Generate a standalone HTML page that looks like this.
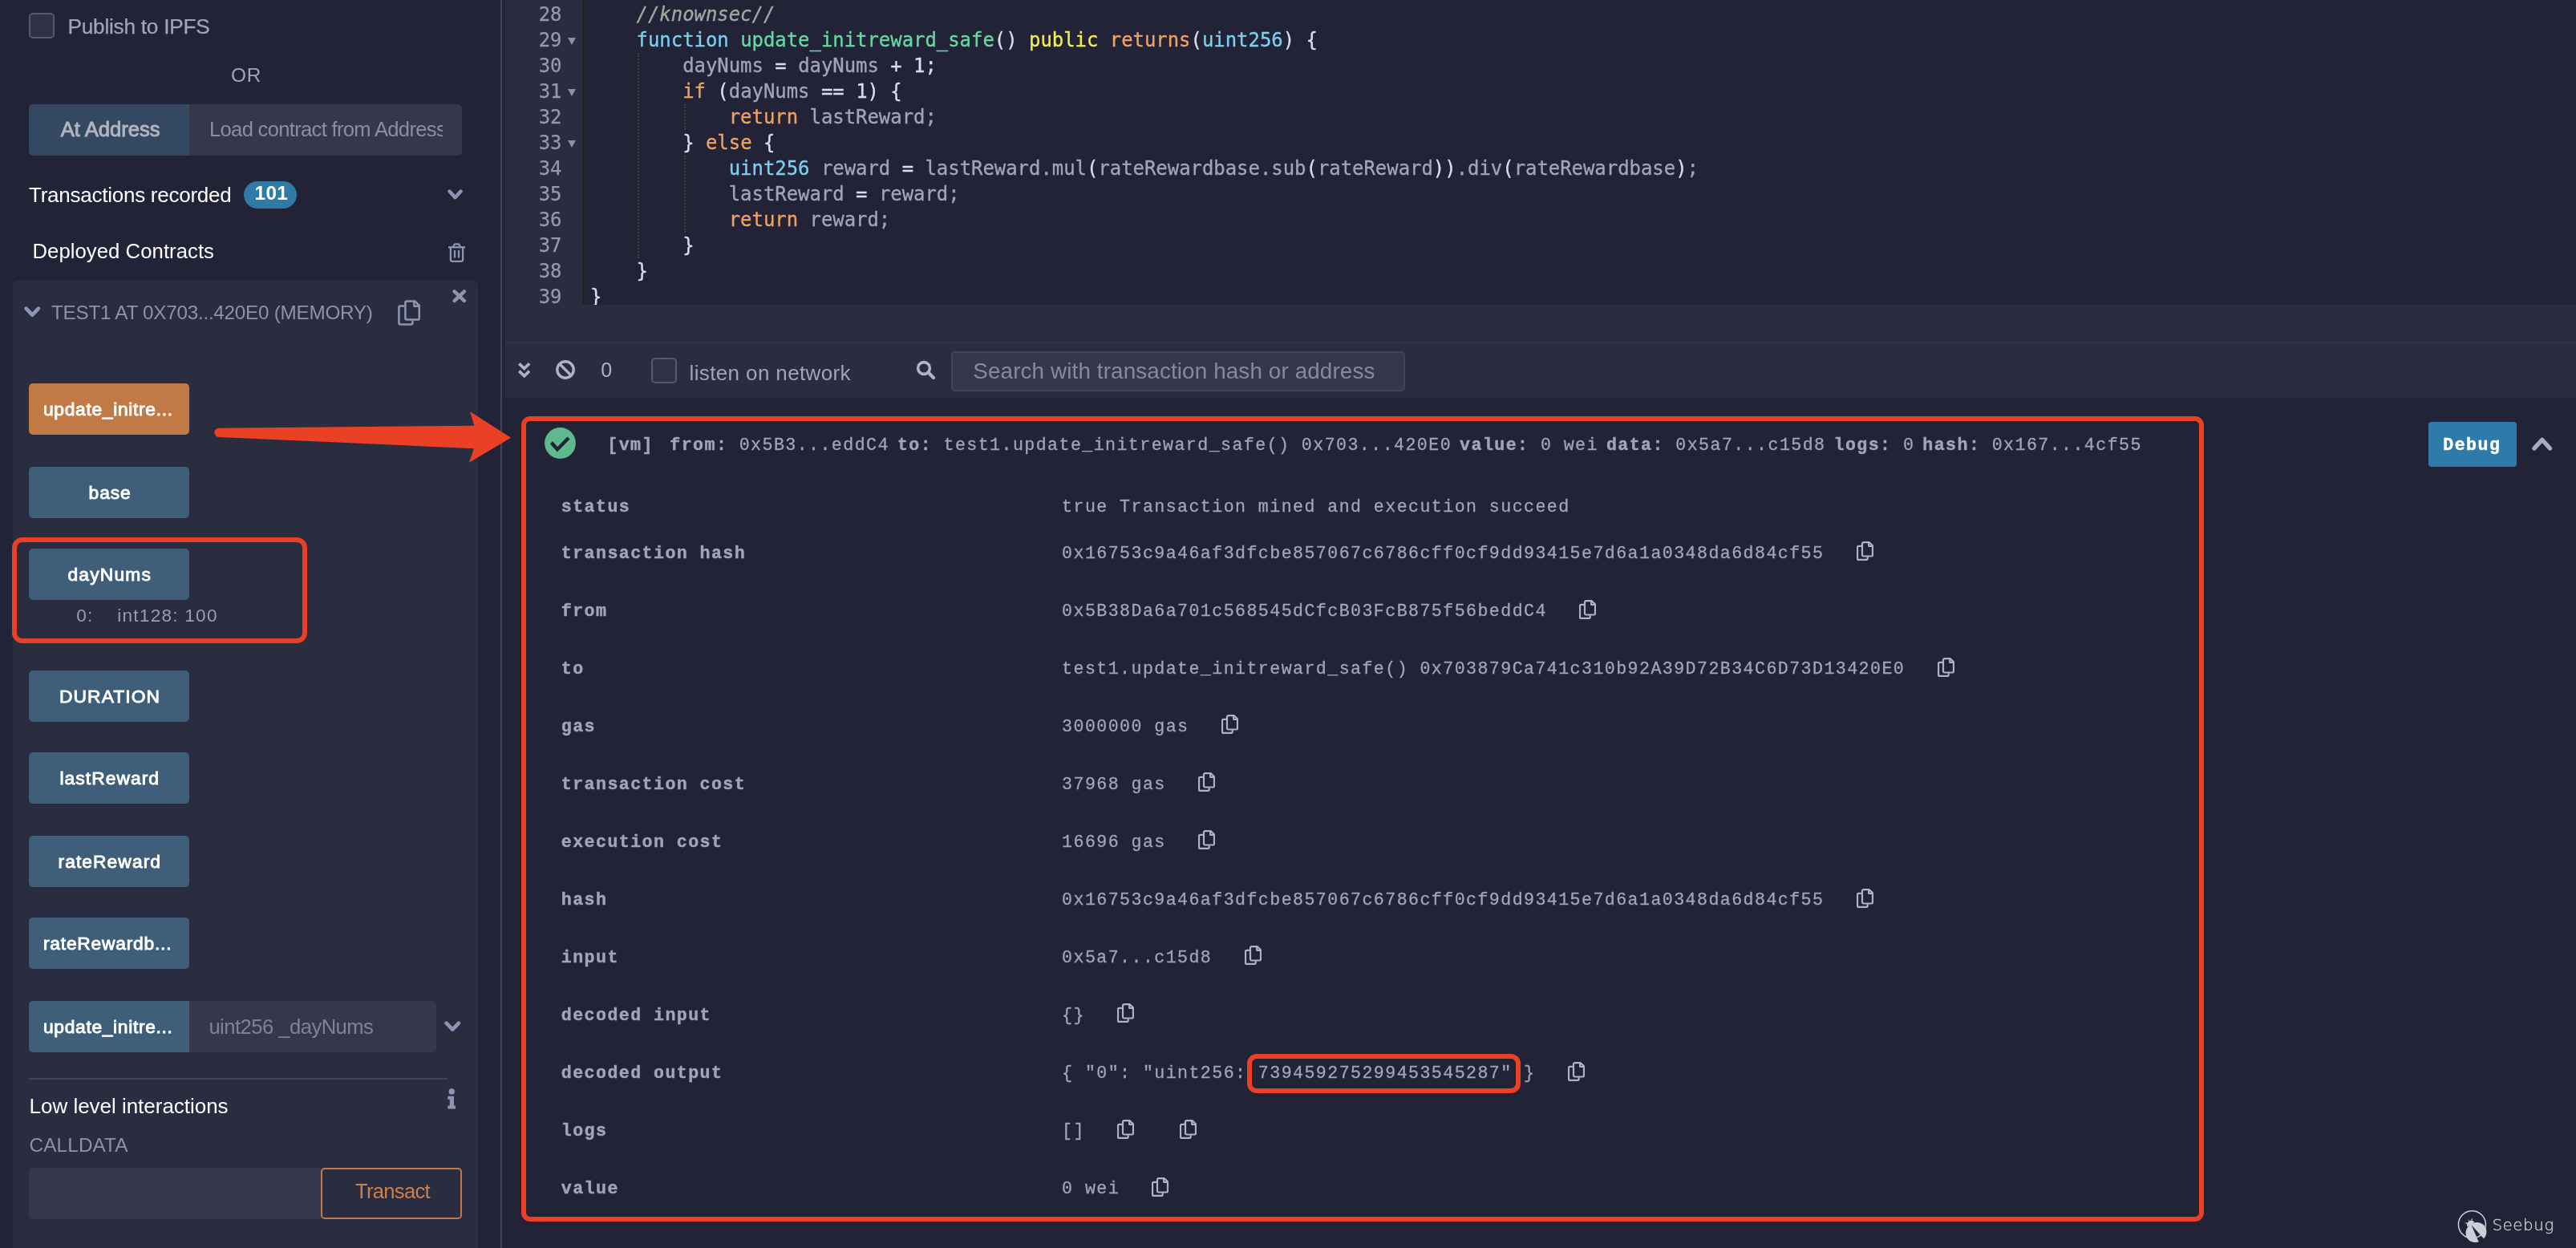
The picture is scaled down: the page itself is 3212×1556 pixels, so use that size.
<!DOCTYPE html>
<html lang="en"><head><meta charset="utf-8"><title>Remix - Ethereum IDE</title><style>
html,body{margin:0;padding:0;background:#222336;}
body{width:3212px;height:1556px;position:relative;overflow:hidden;}
#app{position:absolute;left:0;top:0;width:3212px;height:1556px;will-change:transform;}
.a{position:absolute;}
.t{white-space:pre;}
.ln{font:23.92px/32px 'DejaVu Sans Mono', 'Liberation Mono', monospace;color:#9697b1;text-align:right;height:32px;-webkit-text-stroke:0.25px;}
.cl{font:23.92px/32px 'DejaVu Sans Mono', 'Liberation Mono', monospace;color:#a2a3bd;white-space:pre;height:32px;-webkit-text-stroke:0.3px;}
.cm{color:#a6a6a4;font-style:italic;}
.kw,.ty{color:#7dcff0;}
.fn{color:#66d9a0;}
.pub{color:#f3ee4a;}
.ret{color:#f0a262;}
.pn,.op,.num{color:#dcdcec;}
.id{color:#a2a3bd;}
</style></head>
<body>
<div id="app">
<div class="a" style="left:0;top:0;width:3212px;height:1556px;background:#222336"></div>
<div class="a " style="left:16px;top:350px;width:580px;height:1226px;background:#2a2c3f;border-radius:5px;"></div>
<div class="a " style="left:624px;top:0px;width:2px;height:1556px;background:#424559;"></div>
<div class="a " style="left:630px;top:0px;width:96px;height:380px;background:#2a2c3f;"></div>
<div class="a " style="left:726px;top:0px;width:1.6px;height:380px;background:#24241f;"></div>
<div class="a " style="left:630px;top:380px;width:2582px;height:116px;background:#2a2c3f;"></div>
<div class="a " style="left:630px;top:426px;width:2582px;height:2px;background:#2e3245;"></div>
<div class="a " style="left:36px;top:16px;width:32px;height:32px;background:#2f3147;border:2px solid #555872;border-radius:5px;box-sizing:border-box;"></div>
<span id="t1" class="a t" style="left:84.50px;top:20.32px;font:normal 26.2px/1 'Liberation Sans', sans-serif;color:#a2a3bd;letter-spacing:-0.233px;-webkit-text-stroke:0.25px #a2a3bd;">Publish to IPFS</span>
<span id="t2" class="a t" style="left:288.00px;top:81.55px;font:normal 24.4px/1 'Liberation Sans', sans-serif;color:#a2a3bd;letter-spacing:0.703px;">OR</span>
<div class="a " style="left:36px;top:130px;width:200px;height:64px;background:#344961;border-radius:5px 0 0 5px;"></div>
<div class="a " style="left:236px;top:130px;width:340px;height:64px;background:#35384c;border-radius:0 5px 5px 0;"></div>
<span id="t3" class="a t" style="left:75.80px;top:148.73px;font:normal 25.6px/1 'Liberation Sans', sans-serif;color:#b1b5c2;letter-spacing:-0.008px;-webkit-text-stroke:0.9px #b1b5c2;">At Address</span>
<div class="a" style="left:255px;top:140px;width:296.5px;height:44px;overflow:hidden">
<span id="t4" class="a t" style="left:6.00px;top:8.73px;font:normal 25.6px/1 'Liberation Sans', sans-serif;color:#8b8e9b;letter-spacing:-0.692px;">Load contract from Address</span>
</div>
<span id="t5" class="a t" style="left:36.00px;top:230.19px;font:normal 26px/1 'Liberation Sans', sans-serif;color:#fdfdff;letter-spacing:-0.249px;">Transactions recorded</span>
<div class="a " style="left:303.6px;top:226px;width:66.4px;height:34px;background:#2f7ba6;border-radius:17px;"></div>
<span id="t6" class="a t" style="left:317.50px;top:229.13px;font:bold 24.3px/1 'Liberation Sans', sans-serif;color:#fff;letter-spacing:0.419px;">101</span>
<svg class="a" style="left:558px;top:235.5px;" width="19" height="13" viewBox="0 0 19 13"><path d="M2.5 2.5L9.5 10.200000000000001L16.5 2.5" fill="none" stroke="#8e95b3" stroke-width="4.4" stroke-linecap="round" stroke-linejoin="round"/></svg>
<span id="t7" class="a t" style="left:40.50px;top:300.94px;font:normal 25.7px/1 'Liberation Sans', sans-serif;color:#fdfdff;letter-spacing:0.050px;">Deployed Contracts</span>
<svg class="a" style="left:559px;top:303px;" width="21" height="24" viewBox="0 0 21 24"><g fill="none" stroke="#8e95b3" stroke-width="2.3" stroke-linecap="butt" stroke-linejoin="round"><path d="M0 5.3h21"/><path d="M5.8 5l1.7-3a1.2 1.2 0 0 1 1-.6h4a1.2 1.2 0 0 1 1 .6l1.7 3"/><path d="M2.9 5.6v15.2a2 2 0 0 0 2 2h11.2a2 2 0 0 0 2-2V5.6"/><path d="M8 9v9.6M13 9v9.6"/></g></svg>
<svg class="a" style="left:30px;top:381.5px;" width="20.5" height="13.5" viewBox="0 0 20.5 13.5"><path d="M2.5999999999999996 2.5999999999999996L10.25 10.6L17.9 2.5999999999999996" fill="none" stroke="#8e95b3" stroke-width="4.6" stroke-linecap="round" stroke-linejoin="round"/></svg>
<span id="t8" class="a t" style="left:64.00px;top:377.83px;font:normal 24.3px/1 'Liberation Sans', sans-serif;color:#8e91ab;letter-spacing:-0.277px;">TEST1 AT 0X703...420E0 (MEMORY)</span>
<svg class="a" style="left:496.1px;top:373.9px;" width="28.2" height="32" viewBox="0 0 28.2 32"><g fill="none" stroke="#8e95b3" stroke-width="2.50" stroke-linejoin="round" stroke-linecap="butt"><path d="M8.4 7.6H3.4a2 2 0 0 0-2 2v19a2 2 0 0 0 2 2h13a2 2 0 0 0 2-2v-3"/><path d="M11.4 1.4h9.8l5.6 5.6v15.6a2 2 0 0 1-2 2H11.4a2 2 0 0 1-2-2V3.4a2 2 0 0 1 2-2z"/><path d="M20.4 1.6v6.2h6.2"/></g></svg>
<svg class="a" style="left:564px;top:361px;" width="17.5" height="16.5" viewBox="0 0 17.5 16.5"><path d="M2.6 2.4L14.9 14.1M14.9 2.4L2.6 14.1" stroke="#8e95b3" stroke-width="4.4" stroke-linecap="round" fill="none"/></svg>
<div class="a " style="left:36px;top:478px;width:200px;height:64px;background:#c17a45;border-radius:5px;"></div>
<span id="t9" class="a t" style="left:54.00px;top:498.70px;font:normal 22.8px/1 'Liberation Sans', sans-serif;color:#fff;letter-spacing:0.680px;-webkit-text-stroke:0.9px #fff;">update_initre...</span>
<div class="a " style="left:36px;top:582px;width:200px;height:64px;background:#3e5e7a;border-radius:5px;"></div>
<span id="t10" class="a t" style="left:110.60px;top:602.70px;font:normal 22.8px/1 'Liberation Sans', sans-serif;color:#fff;letter-spacing:0.890px;-webkit-text-stroke:0.9px #fff;">base</span>
<div class="a " style="left:36px;top:684px;width:200px;height:64px;background:#3e5e7a;border-radius:5px;"></div>
<span id="t11" class="a t" style="left:84.50px;top:704.70px;font:normal 22.8px/1 'Liberation Sans', sans-serif;color:#fff;letter-spacing:1.172px;-webkit-text-stroke:0.9px #fff;">dayNums</span>
<span id="t12" class="a t" style="left:95.20px;top:756.67px;font:normal 22.6px/1 'Liberation Sans', sans-serif;color:#9a9cb5;letter-spacing:1.275px;">0:</span>
<span id="t13" class="a t" style="left:146.30px;top:756.67px;font:normal 22.6px/1 'Liberation Sans', sans-serif;color:#9a9cb5;letter-spacing:1.234px;">int128: 100</span>
<div class="a " style="left:36px;top:836px;width:200px;height:64px;background:#3e5e7a;border-radius:5px;"></div>
<span id="t14" class="a t" style="left:74.00px;top:856.70px;font:normal 22.8px/1 'Liberation Sans', sans-serif;color:#fff;letter-spacing:1.080px;-webkit-text-stroke:0.9px #fff;">DURATION</span>
<div class="a " style="left:36px;top:938px;width:200px;height:64px;background:#3e5e7a;border-radius:5px;"></div>
<span id="t15" class="a t" style="left:74.50px;top:958.70px;font:normal 22.8px/1 'Liberation Sans', sans-serif;color:#fff;letter-spacing:1.057px;-webkit-text-stroke:0.9px #fff;">lastReward</span>
<div class="a " style="left:36px;top:1042px;width:200px;height:64px;background:#3e5e7a;border-radius:5px;"></div>
<span id="t16" class="a t" style="left:72.50px;top:1062.70px;font:normal 22.8px/1 'Liberation Sans', sans-serif;color:#fff;letter-spacing:1.075px;-webkit-text-stroke:0.9px #fff;">rateReward</span>
<div class="a " style="left:36px;top:1144px;width:200px;height:64px;background:#3e5e7a;border-radius:5px;"></div>
<span id="t17" class="a t" style="left:54.00px;top:1164.70px;font:normal 22.8px/1 'Liberation Sans', sans-serif;color:#fff;letter-spacing:0.769px;-webkit-text-stroke:0.9px #fff;">rateRewardb...</span>
<div class="a " style="left:36px;top:1248px;width:200px;height:64px;background:#3e5e7a;border-radius:5px 0 0 5px;"></div>
<span id="t18" class="a t" style="left:54.00px;top:1268.70px;font:normal 22.8px/1 'Liberation Sans', sans-serif;color:#fff;letter-spacing:0.667px;-webkit-text-stroke:0.9px #fff;">update_initre...</span>
<div class="a " style="left:236px;top:1248px;width:308px;height:64px;background:#35384c;border-radius:0 5px 5px 0;"></div>
<span id="t19" class="a t" style="left:260.40px;top:1268.33px;font:normal 25.6px/1 'Liberation Sans', sans-serif;color:#7f8292;letter-spacing:-0.526px;">uint256 _dayNums</span>
<svg class="a" style="left:554px;top:1273px;" width="20.5" height="13.5" viewBox="0 0 20.5 13.5"><path d="M2.5999999999999996 2.5999999999999996L10.25 10.6L17.9 2.5999999999999996" fill="none" stroke="#8e95b3" stroke-width="4.6" stroke-linecap="round" stroke-linejoin="round"/></svg>
<div class="a " style="left:15px;top:670.4px;width:367.5px;height:131.4px;border:6px solid #ea4025;border-radius:13px;box-sizing:border-box;"></div>
<div class="a " style="left:36px;top:1344px;width:522px;height:2px;background:#42455a;"></div>
<span id="t20" class="a t" style="left:36.60px;top:1366.39px;font:normal 26px/1 'Liberation Sans', sans-serif;color:#fdfdff;letter-spacing:-0.027px;">Low level interactions</span>
<svg class="a" style="left:557.2px;top:1357.4px;" width="12" height="27" viewBox="0 0 12 27"><circle cx="6.2" cy="3.9" r="3.7" fill="#8e95b3"/><path d="M1.3 9.8h7.7v11.8h1.9v4H1.3v-4h2.5v-7.8H1.3z" fill="#8e95b3"/></svg>
<span id="t21" class="a t" style="left:36.60px;top:1416.03px;font:normal 24.3px/1 'Liberation Sans', sans-serif;color:#8e91ab;letter-spacing:0.127px;">CALLDATA</span>
<div class="a " style="left:36px;top:1456px;width:364px;height:64px;background:#35384c;border-radius:5px 0 0 5px;"></div>
<div class="a " style="left:400px;top:1456px;width:176px;height:64px;border:2px solid #c17a45;border-radius:5px;box-sizing:border-box;"></div>
<span id="t22" class="a t" style="left:443.00px;top:1473.03px;font:normal 25.6px/1 'Liberation Sans', sans-serif;color:#c9824e;letter-spacing:-0.703px;">Transact</span>
<svg class="a" style="left:0;top:0" width="3212" height="1556" viewBox="0 0 3212 1556"><path d="M273 533.7 L591.4 530.7 L585.8 513.1 L637.1 545.7 L585 576.7 L590.9 559.2 L273 544.9 A5.6 5.6 0 0 1 273 533.7Z" fill="#ea4025"/></svg>
<div class="a" style="left:630px;top:0;width:2582px;height:380px;overflow:hidden">
<div class="a ln" style="left:0;top:1.8px;width:70.5px;">28</div>
<div class="a cl" style="left:106px;top:1.8px;">    <span class="cm">//knownsec//</span></div>
<div class="a ln" style="left:0;top:33.8px;width:70.5px;">29</div>
<div class="a" style="left:78px;top:46.8px;width:0;height:0;border-left:5px solid transparent;border-right:5px solid transparent;border-top:9.4px solid #8e8fa8;"></div>
<div class="a cl" style="left:106px;top:33.8px;">    <span class="kw">function</span> <span class="fn">update_initreward_safe</span><span class="pn">()</span> <span class="pub">public</span> <span class="ret">returns</span><span class="pn">(</span><span class="ty">uint256</span><span class="pn">)</span> <span class="pn">{</span></div>
<div class="a ln" style="left:0;top:65.8px;width:70.5px;">30</div>
<div class="a cl" style="left:106px;top:65.8px;">        <span class="id">dayNums</span> <span class="op">=</span> <span class="id">dayNums</span> <span class="op">+</span> <span class="num">1</span><span class="pn">;</span></div>
<div class="a ln" style="left:0;top:97.8px;width:70.5px;">31</div>
<div class="a" style="left:78px;top:110.8px;width:0;height:0;border-left:5px solid transparent;border-right:5px solid transparent;border-top:9.4px solid #8e8fa8;"></div>
<div class="a cl" style="left:106px;top:97.8px;">        <span class="ret">if</span> <span class="pn">(</span><span class="id">dayNums</span> <span class="op">==</span> <span class="num">1</span><span class="pn">)</span> <span class="pn">{</span></div>
<div class="a ln" style="left:0;top:129.8px;width:70.5px;">32</div>
<div class="a cl" style="left:106px;top:129.8px;">            <span class="ret">return</span> <span class="id">lastReward</span><span class="id">;</span></div>
<div class="a ln" style="left:0;top:161.8px;width:70.5px;">33</div>
<div class="a" style="left:78px;top:174.8px;width:0;height:0;border-left:5px solid transparent;border-right:5px solid transparent;border-top:9.4px solid #8e8fa8;"></div>
<div class="a cl" style="left:106px;top:161.8px;">        <span class="pn">}</span> <span class="ret">else</span> <span class="pn">{</span></div>
<div class="a ln" style="left:0;top:193.8px;width:70.5px;">34</div>
<div class="a cl" style="left:106px;top:193.8px;">            <span class="ty">uint256</span> <span class="id">reward</span> <span class="op">=</span> <span class="id">lastReward</span><span class="id">.</span><span class="id">mul</span><span class="pn">(</span><span class="id">rateRewardbase</span><span class="id">.</span><span class="id">sub</span><span class="pn">(</span><span class="id">rateReward</span><span class="pn">))</span><span class="id">.</span><span class="id">div</span><span class="pn">(</span><span class="id">rateRewardbase</span><span class="pn">)</span><span class="id">;</span></div>
<div class="a ln" style="left:0;top:225.8px;width:70.5px;">35</div>
<div class="a cl" style="left:106px;top:225.8px;">            <span class="id">lastReward</span> <span class="op">=</span> <span class="id">reward</span><span class="id">;</span></div>
<div class="a ln" style="left:0;top:257.8px;width:70.5px;">36</div>
<div class="a cl" style="left:106px;top:257.8px;">            <span class="ret">return</span> <span class="id">reward</span><span class="id">;</span></div>
<div class="a ln" style="left:0;top:289.8px;width:70.5px;">37</div>
<div class="a cl" style="left:106px;top:289.8px;">        <span class="pn">}</span></div>
<div class="a ln" style="left:0;top:321.8px;width:70.5px;">38</div>
<div class="a cl" style="left:106px;top:321.8px;">    <span class="pn">}</span></div>
<div class="a ln" style="left:0;top:353.8px;width:70.5px;">39</div>
<div class="a cl" style="left:106px;top:353.8px;"><span class="pn">}</span></div>
<div class="a" style="left:165px;top:65.8px;height:256px;border-left:2px dotted #434338;"></div>
<div class="a" style="left:222.60000000000002px;top:129.8px;height:32px;border-left:2px dotted #434338;"></div>
<div class="a" style="left:222.60000000000002px;top:193.8px;height:96px;border-left:2px dotted #434338;"></div>
</div>
<svg class="a" style="left:645.8px;top:451.6px;" width="15.4" height="19" viewBox="0 0 15.4 19"><path d="M1.3 1.4L7.7 7.6L14.1 1.4M1.3 10.6L7.7 16.8L14.1 10.6" fill="none" stroke="#b0b1ce" stroke-width="3.6" stroke-linecap="butt" stroke-linejoin="miter"/></svg>
<svg class="a" style="left:693.2px;top:449px;" width="24" height="24" viewBox="0 0 24 24"><circle cx="12" cy="12" r="10.2" fill="none" stroke="#b0b1ce" stroke-width="3.4"/><path d="M5 5L19 19" stroke="#b0b1ce" stroke-width="3.2"/></svg>
<span id="t23" class="a t" style="left:749.20px;top:449.04px;font:normal 25px/1 'Liberation Sans', sans-serif;color:#b0b1ce;">0</span>
<div class="a " style="left:812px;top:446px;width:31.6px;height:32px;background:#2f3147;border:2px solid #555872;border-radius:5px;box-sizing:border-box;"></div>
<span id="t24" class="a t" style="left:859.50px;top:451.79px;font:normal 26px/1 'Liberation Sans', sans-serif;color:#a2a3bd;letter-spacing:0.376px;">listen on network</span>
<svg class="a" style="left:1141.5px;top:448.6px;" width="24.5" height="24.5" viewBox="0 0 24.5 24.5"><circle cx="10" cy="10" r="7.4" fill="none" stroke="#b0b1ce" stroke-width="3.6"/><path d="M15.6 15.6L22 22" stroke="#b0b1ce" stroke-width="4.2" stroke-linecap="round"/></svg>
<div class="a " style="left:1186px;top:438px;width:566px;height:49.5px;background:#35384c;border:2px solid #41445a;border-radius:5px;box-sizing:border-box;"></div>
<span id="t25" class="a t" style="left:1213.30px;top:448.77px;font:normal 27.8px/1 'Liberation Sans', sans-serif;color:#868c96;letter-spacing:0.134px;">Search with transaction hash or address</span>
<div class="a " style="left:650px;top:519px;width:2098px;height:1004px;border:6.5px solid #ea4025;border-radius:11px;box-sizing:border-box;"></div>
<svg class="a" style="left:678.7px;top:533.4px;" width="39" height="39" viewBox="0 0 39 39"><circle cx="19.5" cy="19.5" r="19.4" fill="#60b88f"/><path d="M8.5 18.8L15.9 27.2L30 13" fill="none" stroke="#222336" stroke-width="4.4" stroke-linecap="butt" stroke-linejoin="miter"/></svg>
<span id="t26" class="a t" style="left:757.30px;top:545.44px;font:bold 21.6px/1 'Liberation Mono', monospace;color:#a2a3bd;letter-spacing:1.44px;-webkit-text-stroke:0.4px #a2a3bd;">[vm]</span>
<span id="t27" class="a t" style="left:835.30px;top:545.44px;font:bold 21.6px/1 'Liberation Mono', monospace;color:#a2a3bd;letter-spacing:1.44px;-webkit-text-stroke:0.4px #a2a3bd;">from:</span>
<span id="t28" class="a t" style="left:921.70px;top:545.44px;font:normal 21.6px/1 'Liberation Mono', monospace;color:#a2a3bd;letter-spacing:1.44px;-webkit-text-stroke:0.3px #a2a3bd;">0x5B3...eddC4</span>
<span id="t29" class="a t" style="left:1118.90px;top:545.44px;font:bold 21.6px/1 'Liberation Mono', monospace;color:#a2a3bd;letter-spacing:1.44px;-webkit-text-stroke:0.4px #a2a3bd;">to:</span>
<span id="t30" class="a t" style="left:1176.50px;top:545.44px;font:normal 21.6px/1 'Liberation Mono', monospace;color:#a2a3bd;letter-spacing:1.44px;-webkit-text-stroke:0.3px #a2a3bd;">test1.update_initreward_safe() 0x703...420E0</span>
<span id="t31" class="a t" style="left:1820.10px;top:545.44px;font:bold 21.6px/1 'Liberation Mono', monospace;color:#a2a3bd;letter-spacing:1.44px;-webkit-text-stroke:0.4px #a2a3bd;">value:</span>
<span id="t32" class="a t" style="left:1920.90px;top:545.44px;font:normal 21.6px/1 'Liberation Mono', monospace;color:#a2a3bd;letter-spacing:1.44px;-webkit-text-stroke:0.3px #a2a3bd;">0 wei</span>
<span id="t33" class="a t" style="left:2002.90px;top:545.44px;font:bold 21.6px/1 'Liberation Mono', monospace;color:#a2a3bd;letter-spacing:1.44px;-webkit-text-stroke:0.4px #a2a3bd;">data:</span>
<span id="t34" class="a t" style="left:2089.30px;top:545.44px;font:normal 21.6px/1 'Liberation Mono', monospace;color:#a2a3bd;letter-spacing:1.44px;-webkit-text-stroke:0.3px #a2a3bd;">0x5a7...c15d8</span>
<span id="t35" class="a t" style="left:2286.50px;top:545.44px;font:bold 21.6px/1 'Liberation Mono', monospace;color:#a2a3bd;letter-spacing:1.44px;-webkit-text-stroke:0.4px #a2a3bd;">logs:</span>
<span id="t36" class="a t" style="left:2372.90px;top:545.44px;font:normal 21.6px/1 'Liberation Mono', monospace;color:#a2a3bd;letter-spacing:1.44px;-webkit-text-stroke:0.3px #a2a3bd;">0</span>
<span id="t37" class="a t" style="left:2397.30px;top:545.44px;font:bold 21.6px/1 'Liberation Mono', monospace;color:#a2a3bd;letter-spacing:1.44px;-webkit-text-stroke:0.4px #a2a3bd;">hash:</span>
<span id="t38" class="a t" style="left:2483.70px;top:545.44px;font:normal 21.6px/1 'Liberation Mono', monospace;color:#a2a3bd;letter-spacing:1.44px;-webkit-text-stroke:0.3px #a2a3bd;">0x167...4cf55</span>
<div class="a " style="left:3028px;top:526px;width:110px;height:56px;background:#2f7aa8;border-radius:4px;"></div>
<span id="t39" class="a t" style="left:3046.30px;top:545.44px;font:bold 21.6px/1 'Liberation Mono', monospace;color:#fff;letter-spacing:1.44px;-webkit-text-stroke:0.4px #fff;">Debug</span>
<svg class="a" style="left:3157px;top:545px;" width="25.5" height="17" viewBox="0 0 25.5 17"><path d="M3.0 14.0L12.75 3.3000000000000003L22.5 14.0" fill="none" stroke="#a9aac4" stroke-width="5.4" stroke-linecap="round" stroke-linejoin="round"/></svg>
<span id="t40" class="a t" style="left:699.80px;top:622.04px;font:bold 21.6px/1 'Liberation Mono', monospace;color:#a2a3bd;letter-spacing:1.44px;-webkit-text-stroke:0.4px #a2a3bd;">status</span>
<span id="t41" class="a t" style="left:1324.10px;top:622.04px;font:normal 21.6px/1 'Liberation Mono', monospace;color:#a2a3bd;letter-spacing:1.44px;-webkit-text-stroke:0.3px #a2a3bd;">true Transaction mined and execution succeed</span>
<span id="t42" class="a t" style="left:699.80px;top:679.64px;font:bold 21.6px/1 'Liberation Mono', monospace;color:#a2a3bd;letter-spacing:1.44px;-webkit-text-stroke:0.4px #a2a3bd;">transaction hash</span>
<span id="t43" class="a t" style="left:1324.10px;top:679.64px;font:normal 21.6px/1 'Liberation Mono', monospace;color:#a2a3bd;letter-spacing:1.44px;-webkit-text-stroke:0.3px #a2a3bd;">0x16753c9a46af3dfcbe857067c6786cff0cf9dd93415e7d6a1a0348da6d84cf55</span>
<svg class="a" style="left:2315px;top:675.3000000000001px;" width="21" height="24.2" viewBox="0 0 28.2 32"><g fill="none" stroke="#b0b1ce" stroke-width="2.95" stroke-linejoin="round" stroke-linecap="butt"><path d="M8.4 7.6H3.4a2 2 0 0 0-2 2v19a2 2 0 0 0 2 2h13a2 2 0 0 0 2-2v-3"/><path d="M11.4 1.4h9.8l5.6 5.6v15.6a2 2 0 0 1-2 2H11.4a2 2 0 0 1-2-2V3.4a2 2 0 0 1 2-2z"/><path d="M20.4 1.6v6.2h6.2"/></g></svg>
<span id="t44" class="a t" style="left:699.80px;top:752.04px;font:bold 21.6px/1 'Liberation Mono', monospace;color:#a2a3bd;letter-spacing:1.44px;-webkit-text-stroke:0.4px #a2a3bd;">from</span>
<span id="t45" class="a t" style="left:1324.10px;top:752.04px;font:normal 21.6px/1 'Liberation Mono', monospace;color:#a2a3bd;letter-spacing:1.44px;-webkit-text-stroke:0.3px #a2a3bd;">0x5B38Da6a701c568545dCfcB03FcB875f56beddC4</span>
<svg class="a" style="left:1969px;top:747.7px;" width="21" height="24.2" viewBox="0 0 28.2 32"><g fill="none" stroke="#b0b1ce" stroke-width="2.95" stroke-linejoin="round" stroke-linecap="butt"><path d="M8.4 7.6H3.4a2 2 0 0 0-2 2v19a2 2 0 0 0 2 2h13a2 2 0 0 0 2-2v-3"/><path d="M11.4 1.4h9.8l5.6 5.6v15.6a2 2 0 0 1-2 2H11.4a2 2 0 0 1-2-2V3.4a2 2 0 0 1 2-2z"/><path d="M20.4 1.6v6.2h6.2"/></g></svg>
<span id="t46" class="a t" style="left:699.80px;top:824.04px;font:bold 21.6px/1 'Liberation Mono', monospace;color:#a2a3bd;letter-spacing:1.44px;-webkit-text-stroke:0.4px #a2a3bd;">to</span>
<span id="t47" class="a t" style="left:1324.10px;top:824.04px;font:normal 21.6px/1 'Liberation Mono', monospace;color:#a2a3bd;letter-spacing:1.44px;-webkit-text-stroke:0.3px #a2a3bd;">test1.update_initreward_safe() 0x703879Ca741c310b92A39D72B34C6D73D13420E0</span>
<svg class="a" style="left:2415.5px;top:819.7px;" width="21" height="24.2" viewBox="0 0 28.2 32"><g fill="none" stroke="#b0b1ce" stroke-width="2.95" stroke-linejoin="round" stroke-linecap="butt"><path d="M8.4 7.6H3.4a2 2 0 0 0-2 2v19a2 2 0 0 0 2 2h13a2 2 0 0 0 2-2v-3"/><path d="M11.4 1.4h9.8l5.6 5.6v15.6a2 2 0 0 1-2 2H11.4a2 2 0 0 1-2-2V3.4a2 2 0 0 1 2-2z"/><path d="M20.4 1.6v6.2h6.2"/></g></svg>
<span id="t48" class="a t" style="left:699.80px;top:895.64px;font:bold 21.6px/1 'Liberation Mono', monospace;color:#a2a3bd;letter-spacing:1.44px;-webkit-text-stroke:0.4px #a2a3bd;">gas</span>
<span id="t49" class="a t" style="left:1324.10px;top:895.64px;font:normal 21.6px/1 'Liberation Mono', monospace;color:#a2a3bd;letter-spacing:1.44px;-webkit-text-stroke:0.3px #a2a3bd;">3000000 gas</span>
<svg class="a" style="left:1523px;top:891.3000000000001px;" width="21" height="24.2" viewBox="0 0 28.2 32"><g fill="none" stroke="#b0b1ce" stroke-width="2.95" stroke-linejoin="round" stroke-linecap="butt"><path d="M8.4 7.6H3.4a2 2 0 0 0-2 2v19a2 2 0 0 0 2 2h13a2 2 0 0 0 2-2v-3"/><path d="M11.4 1.4h9.8l5.6 5.6v15.6a2 2 0 0 1-2 2H11.4a2 2 0 0 1-2-2V3.4a2 2 0 0 1 2-2z"/><path d="M20.4 1.6v6.2h6.2"/></g></svg>
<span id="t50" class="a t" style="left:699.80px;top:967.54px;font:bold 21.6px/1 'Liberation Mono', monospace;color:#a2a3bd;letter-spacing:1.44px;-webkit-text-stroke:0.4px #a2a3bd;">transaction cost</span>
<span id="t51" class="a t" style="left:1324.10px;top:967.54px;font:normal 21.6px/1 'Liberation Mono', monospace;color:#a2a3bd;letter-spacing:1.44px;-webkit-text-stroke:0.3px #a2a3bd;">37968 gas</span>
<svg class="a" style="left:1494px;top:963.2px;" width="21" height="24.2" viewBox="0 0 28.2 32"><g fill="none" stroke="#b0b1ce" stroke-width="2.95" stroke-linejoin="round" stroke-linecap="butt"><path d="M8.4 7.6H3.4a2 2 0 0 0-2 2v19a2 2 0 0 0 2 2h13a2 2 0 0 0 2-2v-3"/><path d="M11.4 1.4h9.8l5.6 5.6v15.6a2 2 0 0 1-2 2H11.4a2 2 0 0 1-2-2V3.4a2 2 0 0 1 2-2z"/><path d="M20.4 1.6v6.2h6.2"/></g></svg>
<span id="t52" class="a t" style="left:699.80px;top:1039.54px;font:bold 21.6px/1 'Liberation Mono', monospace;color:#a2a3bd;letter-spacing:1.44px;-webkit-text-stroke:0.4px #a2a3bd;">execution cost</span>
<span id="t53" class="a t" style="left:1324.10px;top:1039.54px;font:normal 21.6px/1 'Liberation Mono', monospace;color:#a2a3bd;letter-spacing:1.44px;-webkit-text-stroke:0.3px #a2a3bd;">16696 gas</span>
<svg class="a" style="left:1494px;top:1035.2px;" width="21" height="24.2" viewBox="0 0 28.2 32"><g fill="none" stroke="#b0b1ce" stroke-width="2.95" stroke-linejoin="round" stroke-linecap="butt"><path d="M8.4 7.6H3.4a2 2 0 0 0-2 2v19a2 2 0 0 0 2 2h13a2 2 0 0 0 2-2v-3"/><path d="M11.4 1.4h9.8l5.6 5.6v15.6a2 2 0 0 1-2 2H11.4a2 2 0 0 1-2-2V3.4a2 2 0 0 1 2-2z"/><path d="M20.4 1.6v6.2h6.2"/></g></svg>
<span id="t54" class="a t" style="left:699.80px;top:1112.04px;font:bold 21.6px/1 'Liberation Mono', monospace;color:#a2a3bd;letter-spacing:1.44px;-webkit-text-stroke:0.4px #a2a3bd;">hash</span>
<span id="t55" class="a t" style="left:1324.10px;top:1112.04px;font:normal 21.6px/1 'Liberation Mono', monospace;color:#a2a3bd;letter-spacing:1.44px;-webkit-text-stroke:0.3px #a2a3bd;">0x16753c9a46af3dfcbe857067c6786cff0cf9dd93415e7d6a1a0348da6d84cf55</span>
<svg class="a" style="left:2315px;top:1107.7px;" width="21" height="24.2" viewBox="0 0 28.2 32"><g fill="none" stroke="#b0b1ce" stroke-width="2.95" stroke-linejoin="round" stroke-linecap="butt"><path d="M8.4 7.6H3.4a2 2 0 0 0-2 2v19a2 2 0 0 0 2 2h13a2 2 0 0 0 2-2v-3"/><path d="M11.4 1.4h9.8l5.6 5.6v15.6a2 2 0 0 1-2 2H11.4a2 2 0 0 1-2-2V3.4a2 2 0 0 1 2-2z"/><path d="M20.4 1.6v6.2h6.2"/></g></svg>
<span id="t56" class="a t" style="left:699.80px;top:1183.54px;font:bold 21.6px/1 'Liberation Mono', monospace;color:#a2a3bd;letter-spacing:1.44px;-webkit-text-stroke:0.4px #a2a3bd;">input</span>
<span id="t57" class="a t" style="left:1324.10px;top:1183.54px;font:normal 21.6px/1 'Liberation Mono', monospace;color:#a2a3bd;letter-spacing:1.44px;-webkit-text-stroke:0.3px #a2a3bd;">0x5a7...c15d8</span>
<svg class="a" style="left:1552px;top:1179.2px;" width="21" height="24.2" viewBox="0 0 28.2 32"><g fill="none" stroke="#b0b1ce" stroke-width="2.95" stroke-linejoin="round" stroke-linecap="butt"><path d="M8.4 7.6H3.4a2 2 0 0 0-2 2v19a2 2 0 0 0 2 2h13a2 2 0 0 0 2-2v-3"/><path d="M11.4 1.4h9.8l5.6 5.6v15.6a2 2 0 0 1-2 2H11.4a2 2 0 0 1-2-2V3.4a2 2 0 0 1 2-2z"/><path d="M20.4 1.6v6.2h6.2"/></g></svg>
<span id="t58" class="a t" style="left:699.80px;top:1255.54px;font:bold 21.6px/1 'Liberation Mono', monospace;color:#a2a3bd;letter-spacing:1.44px;-webkit-text-stroke:0.4px #a2a3bd;">decoded input</span>
<span id="t59" class="a t" style="left:1324.10px;top:1255.54px;font:normal 21.6px/1 'Liberation Mono', monospace;color:#a2a3bd;letter-spacing:1.44px;-webkit-text-stroke:0.3px #a2a3bd;">{}</span>
<svg class="a" style="left:1393.3px;top:1251.2px;" width="21" height="24.2" viewBox="0 0 28.2 32"><g fill="none" stroke="#b0b1ce" stroke-width="2.95" stroke-linejoin="round" stroke-linecap="butt"><path d="M8.4 7.6H3.4a2 2 0 0 0-2 2v19a2 2 0 0 0 2 2h13a2 2 0 0 0 2-2v-3"/><path d="M11.4 1.4h9.8l5.6 5.6v15.6a2 2 0 0 1-2 2H11.4a2 2 0 0 1-2-2V3.4a2 2 0 0 1 2-2z"/><path d="M20.4 1.6v6.2h6.2"/></g></svg>
<span id="t60" class="a t" style="left:699.80px;top:1328.04px;font:bold 21.6px/1 'Liberation Mono', monospace;color:#a2a3bd;letter-spacing:1.44px;-webkit-text-stroke:0.4px #a2a3bd;">decoded output</span>
<span id="t61" class="a t" style="left:1324.10px;top:1328.04px;font:normal 21.6px/1 'Liberation Mono', monospace;color:#a2a3bd;letter-spacing:1.44px;-webkit-text-stroke:0.3px #a2a3bd;">{ "0": "uint256: 739459275299453545287" }</span>
<svg class="a" style="left:1954.5px;top:1323.7px;" width="21" height="24.2" viewBox="0 0 28.2 32"><g fill="none" stroke="#b0b1ce" stroke-width="2.95" stroke-linejoin="round" stroke-linecap="butt"><path d="M8.4 7.6H3.4a2 2 0 0 0-2 2v19a2 2 0 0 0 2 2h13a2 2 0 0 0 2-2v-3"/><path d="M11.4 1.4h9.8l5.6 5.6v15.6a2 2 0 0 1-2 2H11.4a2 2 0 0 1-2-2V3.4a2 2 0 0 1 2-2z"/><path d="M20.4 1.6v6.2h6.2"/></g></svg>
<span id="t62" class="a t" style="left:699.80px;top:1400.04px;font:bold 21.6px/1 'Liberation Mono', monospace;color:#a2a3bd;letter-spacing:1.44px;-webkit-text-stroke:0.4px #a2a3bd;">logs</span>
<span id="t63" class="a t" style="left:1324.10px;top:1400.04px;font:normal 21.6px/1 'Liberation Mono', monospace;color:#a2a3bd;letter-spacing:1.44px;-webkit-text-stroke:0.3px #a2a3bd;">[]</span>
<svg class="a" style="left:1393.3px;top:1395.7px;" width="21" height="24.2" viewBox="0 0 28.2 32"><g fill="none" stroke="#b0b1ce" stroke-width="2.95" stroke-linejoin="round" stroke-linecap="butt"><path d="M8.4 7.6H3.4a2 2 0 0 0-2 2v19a2 2 0 0 0 2 2h13a2 2 0 0 0 2-2v-3"/><path d="M11.4 1.4h9.8l5.6 5.6v15.6a2 2 0 0 1-2 2H11.4a2 2 0 0 1-2-2V3.4a2 2 0 0 1 2-2z"/><path d="M20.4 1.6v6.2h6.2"/></g></svg>
<svg class="a" style="left:1470.6px;top:1395.7px;" width="21" height="24.2" viewBox="0 0 28.2 32"><g fill="none" stroke="#b0b1ce" stroke-width="2.95" stroke-linejoin="round" stroke-linecap="butt"><path d="M8.4 7.6H3.4a2 2 0 0 0-2 2v19a2 2 0 0 0 2 2h13a2 2 0 0 0 2-2v-3"/><path d="M11.4 1.4h9.8l5.6 5.6v15.6a2 2 0 0 1-2 2H11.4a2 2 0 0 1-2-2V3.4a2 2 0 0 1 2-2z"/><path d="M20.4 1.6v6.2h6.2"/></g></svg>
<span id="t64" class="a t" style="left:699.80px;top:1472.04px;font:bold 21.6px/1 'Liberation Mono', monospace;color:#a2a3bd;letter-spacing:1.44px;-webkit-text-stroke:0.4px #a2a3bd;">value</span>
<span id="t65" class="a t" style="left:1324.10px;top:1472.04px;font:normal 21.6px/1 'Liberation Mono', monospace;color:#a2a3bd;letter-spacing:1.44px;-webkit-text-stroke:0.3px #a2a3bd;">0 wei</span>
<svg class="a" style="left:1436.3px;top:1467.7px;" width="21" height="24.2" viewBox="0 0 28.2 32"><g fill="none" stroke="#b0b1ce" stroke-width="2.95" stroke-linejoin="round" stroke-linecap="butt"><path d="M8.4 7.6H3.4a2 2 0 0 0-2 2v19a2 2 0 0 0 2 2h13a2 2 0 0 0 2-2v-3"/><path d="M11.4 1.4h9.8l5.6 5.6v15.6a2 2 0 0 1-2 2H11.4a2 2 0 0 1-2-2V3.4a2 2 0 0 1 2-2z"/><path d="M20.4 1.6v6.2h6.2"/></g></svg>
<div class="a " style="left:1554.8px;top:1314.4px;width:341px;height:49px;border:6px solid #ea4025;border-radius:12px;box-sizing:border-box;"></div>
<svg class="a" style="left:3060.2px;top:1501px;" width="50" height="56" viewBox="0 0 50 56"><circle cx="22.4" cy="25.8" r="17" fill="none" stroke="#cfcfd8" stroke-width="1.5"/><g transform="rotate(-33 27.5 35.5)"><ellipse cx="27.5" cy="35.5" rx="13.2" ry="12.2" fill="#cfcfd8"/><path d="M27.5 24.5L23.4 49.5L31.6 49.5Z" fill="#222336"/><path d="M22.3 23.6a5.2 4.6 0 0 1 10.4 0z" fill="#cfcfd8"/><path d="M23.5 20.5l-1.6-2.6 3 1.2zM27.5 19.2l0-3.2 1.4 3zM31.5 20.5l1.8-2.4-3.2 1z" fill="#cfcfd8"/></g><path d="M37.6 33.4A17 17 0 0 1 27 42.2" fill="none" stroke="#cfcfd8" stroke-width="1.3"/></svg>
<span id="t66" class="a t" style="left:3107.40px;top:1517.76px;font:normal 19.9px/1 'DejaVu Sans Light','DejaVu Sans',sans-serif;color:#cfcfd8;letter-spacing:0.536px;-webkit-text-stroke:0.3px #cfcfd8;">Seebug</span>
</div>
</body></html>
